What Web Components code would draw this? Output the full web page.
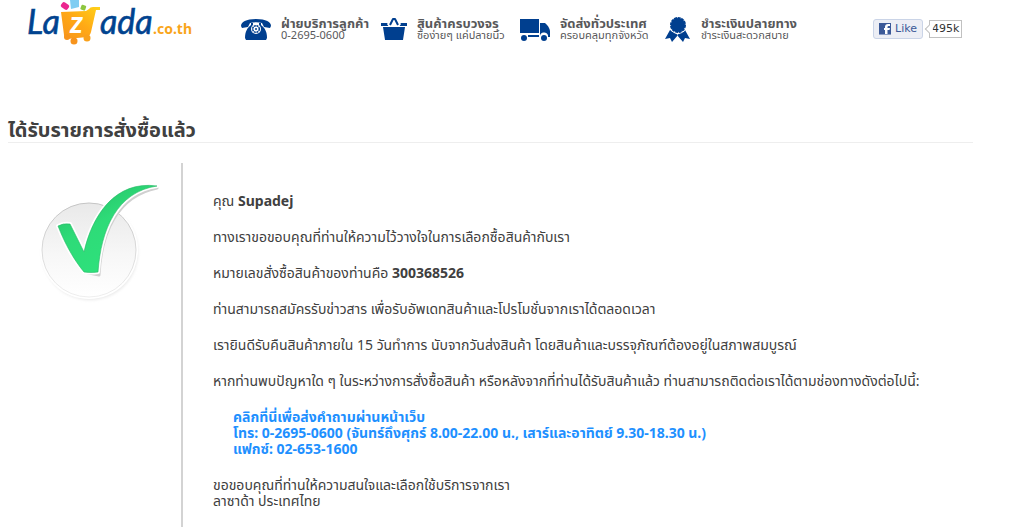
<!DOCTYPE html>
<html lang="th">
<head>
<meta charset="utf-8">
<meta name="viewport" content="width=device-width, initial-scale=1">
<title>Lazada.co.th</title>
<style>
  body {
    margin: 0;
    background: #fff;
    color: #404040;
    font-family: "Noto Sans", "Noto Sans Thai", sans-serif;
    font-size: 14px;
    line-height: 16px;
  }
  a { color: inherit; text-decoration: none; }
</style>
</head>
<body>
<order-page>
  <site-header slot="header">
    <service-item icon="phone" heading="ฝ่ายบริการลูกค้า">0-2695-0600</service-item>
    <service-item icon="basket" heading="สินค้าครบวงจร">ซื้อง่ายๆ แค่ปลายนิ้ว</service-item>
    <service-item icon="truck" heading="จัดส่งทั่วประเทศ">ครอบคลุมทุกจังหวัด</service-item>
    <service-item icon="ribbon" heading="ชำระเงินปลายทาง">ชำระเงินสะดวกสบาย</service-item>
    <like-button slot="social" count="495k">Like</like-button>
  </site-header>
  <order-message heading="ได้รับรายการสั่งซื้อแล้ว">
    <p>คุณ <b>Supadej</b></p>
    <p>ทางเราขอขอบคุณที่ท่านให้ความไว้วางใจในการเลือกซื้อสินค้ากับเรา</p>
    <p>หมายเลขสั่งซื้อสินค้าของท่านคือ <b>300368526</b></p>
    <p>ท่านสามารถสมัครรับข่าวสาร เพื่อรับอัพเดทสินค้าและโปรโมชั่นจากเราได้ตลอดเวลา</p>
    <p>เรายินดีรับคืนสินค้าภายใน 15 วันทำการ นับจากวันส่งสินค้า โดยสินค้าและบรรจุภัณฑ์ต้องอยู่ในสภาพสมบูรณ์</p>
    <p>หากท่านพบปัญหาใด ๆ ในระหว่างการสั่งซื้อสินค้า หรือหลังจากที่ท่านได้รับสินค้าแล้ว ท่านสามารถติดต่อเราได้ตามช่องทางดังต่อไปนี้:</p>
    <contact-list>
      <a href="#contact">คลิกที่นี่เพื่อส่งคำถามผ่านหน้าเว็บ</a>
      <span>โทร: 0-2695-0600 (จันทร์ถึงศุกร์ 8.00-22.00 น., เสาร์และอาทิตย์ 9.30-18.30 น.)</span>
      <span>แฟกซ์: 02-653-1600</span>
    </contact-list>
    <p>ขอขอบคุณที่ท่านให้ความสนใจและเลือกใช้บริการจากเรา<br>ลาซาด้า ประเทศไทย</p>
  </order-message>
</order-page>

<script>
// Service icons, each [width, shapes], all 28px high
const ICONS = {
  phone: [30, `
    <path fill="#003f8f" d="M0 9C0 5 5 2 15 2s15 3 15 7l-1 2-6-1-2-4c-4-1-8-1-12 0l-2 4-6 1z"/>
    <path fill="#003f8f" d="M10 6h2v2h6V6h2v2c4 3 6 7 6 13l-1 2H5l-1-2c0-6 2-10 6-13z"/>
    <circle cx="15" cy="12" r="5" fill="#fff"/>
    <circle cx="15" cy="12" r="3.300" fill="none" stroke="#003f8f" stroke-width="1.500" stroke-dasharray="2 .6"/>
    <circle cx="15" cy="12" r="1" fill="#003f8f"/>`],
  basket: [26, `
    <path fill="#003f8f" d="M0 6h26v3H0z"/>
    <path fill="#fff" d="M6 7l5-7h4l5 7-2 3H8z"/>
    <path fill="none" stroke="#003f8f" stroke-width="2" stroke-linejoin="round" d="M9 8l3-6h2l3 6"/>
    <path fill="#003f8f" d="M2 10h22l-2 13H4z"/>`],
  truck: [30, `
    <path fill="#003f8f" d="M0 2h19v14H0zM20 6h5q4 3 5 8v6h-2a4 4 0 0 0-8-1zM8 18h11v2H8z"/>
    <circle cx="4" cy="21" r="3" fill="#003f8f"/>
    <circle cx="24" cy="21" r="3" fill="#003f8f"/>`],
  ribbon: [26, `
    <path fill="#003f8f" d="M5 13l8 5-6 7-2-4-5 1zM20 13l-8 5 6 7 2-4 5 1z"/>
    <circle cx="13" cy="8" r="9" fill="#fff"/>
    <circle cx="13" cy="8" r="7" fill="#003f8f" stroke="#003f8f" stroke-width="2" stroke-dasharray="3 .6"/>`]
};

class ServiceItem extends HTMLElement {
  constructor() {
    super();
    this.attachShadow({ mode: 'open' });
  }

  connectedCallback() {
    const [width, shapes] = ICONS[this.getAttribute('icon')];
    this.shadowRoot.innerHTML = `
      <style>
        :host { display: flex; gap: 10px; color: #58585a; font-size: 11px; line-height: 12px; white-space: nowrap; }
        svg { flex: none; }
        b { display: block; font-size: 13px; }
      </style>
      <svg width="${width}" height="28" viewBox="0 0 ${width} 28" aria-hidden="true">${shapes}</svg>
      <div><b>${this.getAttribute('heading')}</b><slot></slot></div>
    `;
  }
}

class LikeButton extends HTMLElement {
  constructor() {
    super();
    this.attachShadow({ mode: 'open' });
  }

  connectedCallback() {
    this.shadowRoot.innerHTML = `
      <style>
        :host { display: flex; align-items: center; gap: 6px; font: 11px/16px "DejaVu Sans", sans-serif; }
        button {
          display: flex; align-items: center; gap: 4px; height: 20px; padding: 0 5px;
          border: 1px solid #cad4e7; border-radius: 3px; background: #eceef5;
          color: #3b5998; font: inherit; cursor: pointer;
        }
        .count { position: relative; box-sizing: border-box; height: 18px; padding: 0 2px; border: 1px solid #c1c1c1; color: #333; }
        /* small arrow that points at the button */
        .count::before {
          content: ""; position: absolute; left: -4px; top: 5px; width: 5px; height: 5px;
          background: #fff; border: solid #c1c1c1; border-width: 0 0 1px 1px; transform: rotate(45deg);
        }
      </style>
      <button type="button">
        <svg width="12" height="12" viewBox="0 0 12 12" aria-hidden="true">
          <path fill="#3b5998" d="M0 0h12v12H0z"/>
          <path fill="#fff" d="M6 12V7H5V5h1V4q0-3 3-3h2v2H9L8.500 4v1H11L10.500 7h-2v5z"/>
          <path fill="#8a9cc4" d="M0 11h12v1H0z"/>
        </svg>
        <slot></slot>
      </button>
      <span class="count">${this.getAttribute('count')}</span>
    `;
  }
}

class SiteLogo extends HTMLElement {
  constructor() {
    super();
    this.attachShadow({ mode: 'open' });
    this.shadowRoot.innerHTML = `
      <style>
        :host { display: block; }
        a, svg { display: block; }
        .name { font: italic 34px Lato, sans-serif; fill: #00438f; stroke: #00438f; stroke-width: .6px; }
        .tld { font: bold 14px "Noto Sans", sans-serif; fill: #f9a51a; }
        .z { font: italic bold 30px Lato, sans-serif; fill: #fff; }
      </style>
      <a href="#home" aria-label="Lazada.co.th">
        <svg width="170" height="46" viewBox="0 0 170 46">
          <defs>
            <linearGradient id="cart" x1="0" y1="1" x2="1" y2="0">
              <stop offset="0" stop-color="#f7941d"/>
              <stop offset=".5" stop-color="#ffa915"/>
              <stop offset="1" stop-color="#ffd21a"/>
            </linearGradient>
          </defs>
          <rect x="34" y="3" width="8" height="6" rx="2" fill="#ec268f" transform="rotate(35 38 6)"/>
          <path fill="#7fcdf2" d="M43 0h9v7l-8 2z"/>
          <rect x="54" y="5" width="5" height="5" rx="1" fill="#8dc63f" transform="rotate(20 56 7)"/>
          <path fill="url(#cart)" d="M34 12l25-1 3-2q1-2 4-2h7v3h-4l-5 22q-1 4-4 5l-20 2q-3-1-3-4z"/>
          <circle cx="40" cy="37" r="3" fill="#f7941d"/>
          <circle cx="47" cy="41" r="3.500" fill="#f7941d"/>
          <circle cx="60" cy="38" r="3.500" fill="#f9a11b"/>
          <text class="name" x="0" y="34">La</text>
          <text class="z" x="43" y="33">z</text>
          <text class="name" x="73" y="34">ada</text>
          <text class="tld" x="126" y="34">.co.th</text>
        </svg>
      </a>
    `;
  }
}

class SiteHeader extends HTMLElement {
  constructor() {
    super();
    this.attachShadow({ mode: 'open' });
    this.shadowRoot.innerHTML = `
      <style>
        :host { display: flex; align-items: flex-start; padding-left: 19px; }
        site-logo { flex: none; width: 214px; }
        nav {
          display: grid; grid-template-columns: 140px 139px 145px 208px;
          padding-top: 17px;
        }
        ::slotted(like-button) { margin-top: 19px; }
      </style>
      <site-logo></site-logo>
      <nav><slot></slot></nav>
      <slot name="social"></slot>
    `;
  }
}

class SuccessMark extends HTMLElement {
  constructor() {
    super();
    this.attachShadow({ mode: 'open' });
    this.shadowRoot.innerHTML = `
      <style>
        :host { display: block; }
        svg { display: block; }
      </style>
      <svg width="130" height="124" viewBox="0 0 130 124" role="img" aria-label="OK">
        <defs>
          <linearGradient id="disc" x1="0" y1="0" x2="0" y2="1">
            <stop offset="0" stop-color="#e9e9e9"/>
            <stop offset=".55" stop-color="#f7f7f7"/>
            <stop offset="1" stop-color="#fff"/>
          </linearGradient>
          <linearGradient id="rim" x1="0" y1="0" x2="0" y2="1">
            <stop offset="0" stop-color="#c4c4c4"/>
            <stop offset="1" stop-color="#eee"/>
          </linearGradient>
          <linearGradient id="tick" x1="0" y1="0" x2=".6" y2="1">
            <stop offset="0" stop-color="#22b862"/>
            <stop offset=".5" stop-color="#2edb78"/>
            <stop offset="1" stop-color="#2ee27c"/>
          </linearGradient>
          <filter id="soft" x="-20%" y="-20%" width="140%" height="140%"><feGaussianBlur stdDeviation="1.500"/></filter>
        </defs>
        <circle cx="55" cy="70" r="48" fill="#e8e8e8" filter="url(#soft)"/>
        <circle cx="54" cy="68" r="49" fill="#fff"/>
        <circle cx="54" cy="68" r="47" fill="url(#disc)" stroke="url(#rim)"/>
        <path fill="#d0d0d0" stroke="#d0d0d0" stroke-width="3" stroke-linejoin="round" d="M49 90l15 3C66 51 82 14 122 6 82 12 66 47 63 91z"/>
        <path fill="#fff" stroke="#fff" stroke-width="4" stroke-linejoin="round" d="M23 44q5-3 12-2l14 28C57 34 80-2 122 4 82 10 66 47 63 90q-7 1-14 0C39 78 30 62 23 44z"/>
        <path fill="url(#tick)" stroke="#27b966" stroke-width=".6" d="M23 44q5-3 12-2l14 28C57 34 80-2 122 4 82 10 66 47 63 90q-7 1-14 0C39 78 30 62 23 44z"/>
      </svg>
    `;
  }
}

class ContactList extends HTMLElement {
  constructor() {
    super();
    this.attachShadow({ mode: 'open' });
    this.shadowRoot.innerHTML = `
      <style>
        :host { display: flex; flex-direction: column; align-items: flex-start; padding-left: 20px; color: #1e90ff; font-weight: bold; }
      </style>
      <slot></slot>
    `;
  }
}

class OrderMessage extends HTMLElement {
  constructor() {
    super();
    this.attachShadow({ mode: 'open' });
  }

  connectedCallback() {
    this.shadowRoot.innerHTML = `
      <style>
        :host { display: flex; flex-direction: column; flex: 1; }
        h1 { margin: 0 0 20px; border-bottom: 1px solid #eee; font-size: 20px; line-height: 24px; }
        .body { display: flex; flex: 1; }
        aside { flex: none; width: 146px; padding: 19px 0 0 27px; }
        section {
          display: flex; flex-direction: column; gap: 20px; flex: 1;
          padding: 30px 0 20px 30px; border-left: 2px solid #d3d3d3;
        }
        ::slotted(p) { margin: 0; }
      </style>
      <h1>${this.getAttribute('heading')}</h1>
      <div class="body">
        <aside><success-mark></success-mark></aside>
        <section><slot></slot></section>
      </div>
    `;
  }
}

class OrderPage extends HTMLElement {
  constructor() {
    super();
    this.attachShadow({ mode: 'open' });
    this.shadowRoot.innerHTML = `
      <style>
        :host {
          display: flex; flex-direction: column; gap: 72px; box-sizing: border-box;
          min-height: 100vh; padding: 0 39px 0 8px;
        }
      </style>
      <slot name="header"></slot>
      <slot></slot>
    `;
  }
}

customElements.define('service-item', ServiceItem);
customElements.define('like-button', LikeButton);
customElements.define('site-logo', SiteLogo);
customElements.define('site-header', SiteHeader);
customElements.define('success-mark', SuccessMark);
customElements.define('contact-list', ContactList);
customElements.define('order-message', OrderMessage);
customElements.define('order-page', OrderPage);
</script>
</body>
</html>
